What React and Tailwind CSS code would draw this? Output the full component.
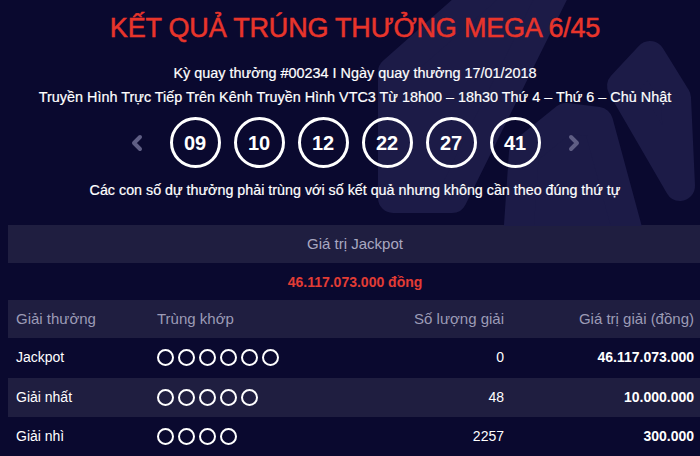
import { ChevronLeft, ChevronRight } from 'lucide-react';

const balls = ['09', '10', '12', '22', '27', '41'];

const prizes = [
  { name: 'Jackpot', match: 6, count: '0', value: '46.117.073.000' },
  { name: 'Giải nhất', match: 5, count: '48', value: '10.000.000', shaded: true },
  { name: 'Giải nhì', match: 4, count: '2257', value: '300.000' },
];

function Backdrop() {
  // faint pinwheel logo behind the header
  return (
    <svg className="absolute left-0 top-0" width="710" height="226" viewBox="0 0 710 226">
      <g fill="#1c1b47" stroke="#1c1b47" strokeWidth="30" strokeLinejoin="round">
        <polygon points="393,72 497,-20 560,-20 452,198 393,198" />
        <polygon points="524,152 566,118 598,122 630,240 518,240" />
        <polygon points="622,86 650,56 676,98 680,186" />
      </g>
    </svg>
  );
}

export default function App() {
  return (
    <div className="w-[700px] h-[456px] overflow-hidden bg-[#0a092f] font-['Liberation_Sans',Arial,sans-serif]">
      <div className="w-[710px]">
        <div className="relative flex flex-col items-center pt-[10px]">
          <Backdrop />
          <h1 className="relative text-[27px] leading-[36px] text-[#e8352b] tracking-[-0.2px] [-webkit-text-stroke:0.5px_#e8352b]">
            KẾT QUẢ TRÚNG THƯỞNG MEGA 6/45
          </h1>
          <p className="relative mt-[15px] text-[14.4px] leading-6 text-white [-webkit-text-stroke:0.2px_white]">
            Kỳ quay thưởng #00234 I Ngày quay thưởng 17/01/2018
          </p>
          <p className="relative text-[14.4px] leading-6 text-white [-webkit-text-stroke:0.2px_white]">
            Truyền Hình Trực Tiếp Trên Kênh Truyền Hình VTC3 Từ 18h00 – 18h30 Thứ 4 – Thứ 6 – Chủ Nhật
          </p>
          <div className="relative mt-2 flex items-center">
            <ChevronLeft size={24} strokeWidth={4} className="text-[#5f5e84] mr-[21px]" />
            <div className="flex gap-[13px]">
              {balls.map((b) => (
                <div
                  key={b}
                  className="w-[51px] h-[51px] rounded-full border-[3px] border-white flex items-center justify-center text-white text-[20px] font-bold"
                >
                  {b}
                </div>
              ))}
            </div>
            <ChevronRight size={24} strokeWidth={4} className="text-[#5f5e84] ml-[21px]" />
          </div>
          <p className="relative mt-[10px] text-[14.3px] leading-6 text-white [-webkit-text-stroke:0.2px_white]">
            Các con số dự thưởng phải trùng với số kết quả nhưng không cần theo đúng thứ tự
          </p>
        </div>

        <div className="mx-2 mt-[23px] h-[38px] bg-[#1f1e40] flex items-center justify-center text-[15px] text-[#a9a8c0]">
          Giá trị Jackpot
        </div>
        <p className="mt-[7px] text-center text-[14px] leading-6 font-bold text-[#e23c35]">46.117.073.000 đồng</p>

        <div className="mx-2 mt-[6px]">
          <div className="grid grid-cols-[141px_200px_155px_1fr] h-[38px] items-center bg-[#1f1e40] text-[15px] text-[#9c9bb6]">
            <span className="pl-2">Giải thưởng</span>
            <span className="pl-2">Trùng khớp</span>
            <span className="text-right">Số lượng giải</span>
            <span className="text-right pr-2">Giá trị giải (đồng)</span>
          </div>
          {prizes.map((p) => (
            <div
              key={p.name}
              className={`grid grid-cols-[141px_200px_155px_1fr] h-[39.5px] items-center text-[14px] text-white ${p.shaded ? 'bg-[#1f1e40]' : ''}`}
            >
              <span className="pl-2">{p.name}</span>
              <span className="pl-2 flex gap-[4px]">
                {Array.from({ length: p.match }).map((_, i) => (
                  <span key={i} className="w-[17px] h-[17px] rounded-full border-[2.5px] border-white" />
                ))}
              </span>
              <span className="text-right">{p.count}</span>
              <span className="text-right pr-2 font-bold">{p.value}</span>
            </div>
          ))}
        </div>
      </div>
    </div>
  );
}
